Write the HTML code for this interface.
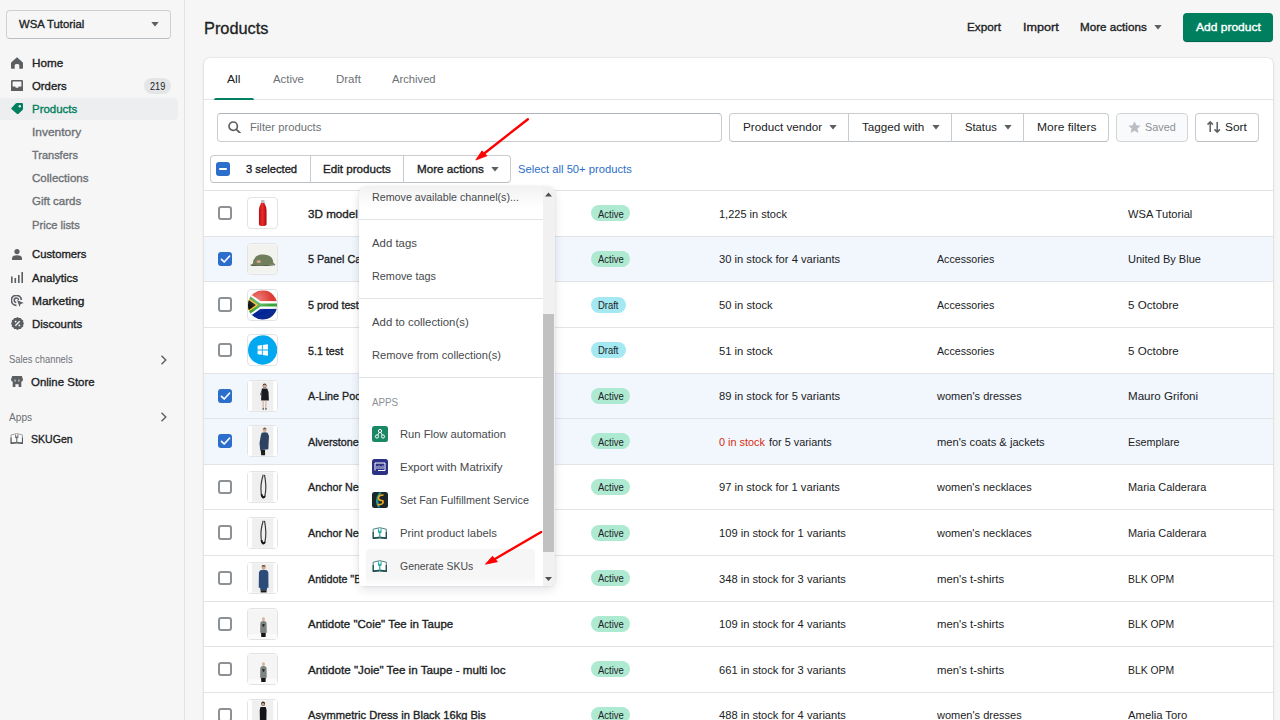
<!DOCTYPE html>
<html><head><meta charset="utf-8"><title>Products</title>
<style>
html,body{margin:0;padding:0;width:1280px;height:720px;overflow:hidden;background:#f6f6f7;font-family:"Liberation Sans",sans-serif;}
.a{position:absolute;box-sizing:border-box;}
.t{position:absolute;white-space:nowrap;line-height:1;transform-origin:0 0;}
</style></head><body>
<div class="a" style="left:184.00px;top:0.00px;width:1.00px;height:720.00px;background:#e1e3e5"></div>
<div class="a" style="left:6.00px;top:9.50px;width:165.00px;height:29.00px;border:1.5px solid #cdd0d3;border-bottom-color:#b9bec2;border-radius:4px;background:#f6f6f7"></div>
<svg class="a" style="left:150.50px;top:22.20px;" width="8" height="5" viewBox="0 0 8 5"><path d="M0.3 0 L7.7 0 L4 4.6Z" fill="#5c5f62"/></svg>
<div class="a" style="left:0.00px;top:97.80px;width:177.50px;height:21.80px;background:#edeeef;border-radius:0 4px 4px 0"></div>
<div class="a" style="left:143.70px;top:77.80px;width:27.20px;height:15.80px;background:#e4e5e7;border-radius:8px"></div>
<svg class="a" style="left:11.00px;top:56.70px;" width="12" height="12" viewBox="0 0 12 12"><path d="M6 0.2 L11.6 5.2 Q12 5.6 12 6.2 V11 Q12 11.8 11.2 11.8 H8.3 V8.2 Q8.3 6.9 6 6.9 Q3.7 6.9 3.7 8.2 V11.8 H0.8 Q0 11.8 0 11 V6.2 Q0 5.6 0.4 5.2Z" fill="#5c5f62"/></svg>
<svg class="a" style="left:11.00px;top:79.80px;" width="12" height="11.5" viewBox="0 0 12 11.5"><path d="M1.2 0 H10.8 Q12 0 12 1.2 V10.3 Q12 11.5 10.8 11.5 H1.2 Q0 11.5 0 10.3 V1.2 Q0 0 1.2 0Z M1.6 1.6 V6.6 H4.2 L4.8 7.8 H7.2 L7.8 6.6 H10.4 V1.6Z" fill="#5c5f62" fill-rule="evenodd"/></svg>
<svg class="a" style="left:11.00px;top:103.20px;" width="12" height="11.3" viewBox="0 0 12 11.3"><path d="M5.6 0 H11 Q12 0 12 1 V6 Q12 6.6 11.5 7.1 L7.3 11 Q6.7 11.5 6.1 11 L0.4 5.9 Q0 5.4 0.5 4.9 L4.7 0.5 Q5.1 0 5.6 0Z" fill="#007f5f"/><circle cx="8.8" cy="3.3" r="1.2" fill="#edeeef"/></svg>
<svg class="a" style="left:12.00px;top:248.70px;" width="10" height="11.5" viewBox="0 0 10 11.5"><circle cx="5" cy="2.6" r="2.6" fill="#5c5f62"/><path d="M0 9.5 Q0 6.3 5 6.3 Q10 6.3 10 9.5 V10.2 Q10 11.5 8.7 11.5 H1.3 Q0 11.5 0 10.2Z" fill="#5c5f62"/></svg>
<svg class="a" style="left:11.00px;top:272.00px;" width="12" height="11" viewBox="0 0 12 11"><rect x="0" y="4.5" width="1.6" height="6.5" fill="#5c5f62"/><rect x="3.5" y="6" width="1.6" height="5" fill="#5c5f62"/><rect x="7" y="3" width="1.6" height="8" fill="#5c5f62"/><rect x="10.4" y="0" width="1.6" height="11" fill="#5c5f62"/></svg>
<svg class="a" style="left:10.50px;top:294.80px;" width="13" height="12" viewBox="0 0 13 12"><path d="M5.5 10.3 A5 5 0 1 1 10.4 5" fill="none" stroke="#5c5f62" stroke-width="1.7"/><path d="M5.3 7.5 A2.2 2.2 0 1 1 7.6 5" fill="none" stroke="#5c5f62" stroke-width="1.5"/><path d="M6 5 L12.8 8 L9.6 9 L8.6 12 Z" fill="#5c5f62"/></svg>
<svg class="a" style="left:10.50px;top:317.30px;" width="13" height="13" viewBox="0 0 13 13"><path d="M6.5 0 L8 1 L9.9 0.9 L10.6 2.5 L12.2 3.3 L12.1 5.1 L13 6.5 L12.1 7.9 L12.2 9.7 L10.6 10.5 L9.9 12.1 L8 12 L6.5 13 L5 12 L3.1 12.1 L2.4 10.5 L0.8 9.7 L0.9 7.9 L0 6.5 L0.9 5.1 L0.8 3.3 L2.4 2.5 L3.1 0.9 L5 1Z" fill="#5c5f62"/><path d="M4.3 8.8 L8.7 4.2" stroke="#f6f6f7" stroke-width="1.3"/><circle cx="4.6" cy="4.6" r="0.9" fill="#f6f6f7"/><circle cx="8.4" cy="8.4" r="0.9" fill="#f6f6f7"/></svg>
<svg class="a" style="left:159.50px;top:354.50px;" width="8" height="10" viewBox="0 0 8 10"><path d="M1.5 0.8 L5.8 5 L1.5 9.2" fill="none" stroke="#5c5f62" stroke-width="1.4"/></svg>
<svg class="a" style="left:159.50px;top:412.00px;" width="8" height="10" viewBox="0 0 8 10"><path d="M1.5 0.8 L5.8 5 L1.5 9.2" fill="none" stroke="#5c5f62" stroke-width="1.4"/></svg>
<svg class="a" style="left:10.90px;top:375.60px;" width="12" height="11.7" viewBox="0 0 12 11.7"><path d="M1.2 0 H10.8 L12 3.6 Q12 5.5 10.3 5.7 V10.7 Q10.3 11.7 9.3 11.7 H7.6 V8.2 H4.4 V11.7 H2.7 Q1.7 11.7 1.7 10.7 V5.7 Q0 5.5 0 3.6Z" fill="#5c5f62"/><rect x="3.6" y="3.6" width="0.9" height="2" fill="#f6f6f7"/><rect x="7.5" y="3.6" width="0.9" height="2" fill="#f6f6f7"/></svg>
<svg class="a" style="left:9.90px;top:431.80px;" width="13.5" height="12.5" viewBox="0 0 13.5 12.5"><g transform="scale(0.87,0.92)"><path d="M1.2 3.2 Q7.75 0.2 14.3 3.2 V11.8 Q7.75 10.6 1.2 11.8Z" fill="#fafafa" stroke="#8a8d90" stroke-width="0.9"/><path d="M0.6 6 L1.8 6 L1.8 11.4 Q7.75 10.2 13.7 11.4 L13.7 6 L14.9 6 L14.9 13.3 Q7.75 11.7 0.6 13.3Z" fill="#55595c"/><path d="M5.9 2.6 H9.6 V6.6 Q7.75 7.6 5.9 6.6Z M7 2.6 V4.8 H8.5 V2.6Z" fill="#6d7175" fill-rule="evenodd"/><rect x="7.1" y="6.6" width="1.3" height="5.2" fill="#6d7175"/></g></svg>
<svg class="a" style="left:1154.20px;top:25.20px;" width="8" height="5" viewBox="0 0 8 5"><path d="M0.3 0 L7.7 0 L4 4.6Z" fill="#5c5f62"/></svg>
<div class="a" style="left:1183.40px;top:12.70px;width:89.40px;height:28.90px;background:#007f5f;border-radius:4px;box-shadow:inset 0 -1px 0 rgba(0,0,0,.2),0 1px 0 rgba(22,29,37,.05)"></div>
<div class="a" style="left:204.00px;top:57.90px;width:1068.80px;height:700.00px;background:#fff;border-radius:6px;box-shadow:0 0 0 1px rgba(63,63,68,.05),0 1px 3px 0 rgba(63,63,68,.15)"></div>
<div class="a" style="left:204.00px;top:99.10px;width:1068.80px;height:1.00px;background:#e1e3e5"></div>
<div class="a" style="left:213.60px;top:97.50px;width:40.00px;height:2.60px;background:#008060;border-radius:3px 3px 0 0"></div>
<div class="a" style="left:217.20px;top:112.90px;width:504.60px;height:28.70px;border:1px solid #c9cccf;border-top-color:#aeb4b9;border-radius:4px;background:#fff"></div>
<svg class="a" style="left:228.00px;top:120.80px;" width="13" height="12.5" viewBox="0 0 13 12.5"><circle cx="5.2" cy="5.2" r="4.2" fill="none" stroke="#5c5f62" stroke-width="1.7"/><path d="M8.3 8.3 L12.2 12.2" stroke="#5c5f62" stroke-width="1.8" stroke-linecap="round"/></svg>
<div class="a" style="left:729.30px;top:112.90px;width:380.10px;height:28.70px;border:1px solid #c9cccf;border-bottom-color:#babfc3;border-radius:4px;background:#fff"></div>
<div class="a" style="left:847.80px;top:112.90px;width:1.00px;height:28.70px;background:#c9cccf"></div>
<div class="a" style="left:951.00px;top:112.90px;width:1.00px;height:28.70px;background:#c9cccf"></div>
<div class="a" style="left:1023.00px;top:112.90px;width:1.00px;height:28.70px;background:#c9cccf"></div>
<svg class="a" style="left:828.60px;top:125.20px;" width="8" height="5" viewBox="0 0 8 5"><path d="M0.3 0 L7.7 0 L4 4.6Z" fill="#5c5f62"/></svg>
<svg class="a" style="left:931.70px;top:125.20px;" width="8" height="5" viewBox="0 0 8 5"><path d="M0.3 0 L7.7 0 L4 4.6Z" fill="#5c5f62"/></svg>
<svg class="a" style="left:1004.00px;top:125.20px;" width="8" height="5" viewBox="0 0 8 5"><path d="M0.3 0 L7.7 0 L4 4.6Z" fill="#5c5f62"/></svg>
<div class="a" style="left:1116.30px;top:112.90px;width:72.20px;height:28.70px;border:1px solid #d2d5d8;border-radius:4px;background:#f9fafb"></div>
<svg class="a" style="left:1128.00px;top:121.00px;" width="13" height="12.5" viewBox="0 0 13 12.5"><path d="M6.5 0.3 L8.4 4.3 L12.7 4.7 L9.4 7.6 L10.4 11.9 L6.5 9.7 L2.6 11.9 L3.6 7.6 L0.3 4.7 L4.6 4.3Z" fill="#babec3"/></svg>
<div class="a" style="left:1195.40px;top:112.90px;width:64.00px;height:28.70px;border:1px solid #c9cccf;border-bottom-color:#babfc3;border-radius:4px;background:#fff"></div>
<svg class="a" style="left:1207.00px;top:121.30px;" width="13.5" height="12" viewBox="0 0 13.5 12"><path d="M3.2 11 V1 M0.5 3.6 L3.2 0.9 L5.9 3.6" fill="none" stroke="#5c5f62" stroke-width="1.5"/><path d="M10.2 1 V11 M7.5 8.4 L10.2 11.1 L12.9 8.4" fill="none" stroke="#5c5f62" stroke-width="1.5"/></svg>
<div class="a" style="left:210.40px;top:154.60px;width:300.20px;height:28.10px;border:1px solid #c9cccf;border-bottom-color:#babfc3;border-radius:4px;background:#fff"></div>
<div class="a" style="left:309.60px;top:154.60px;width:1.00px;height:28.10px;background:#c9cccf"></div>
<div class="a" style="left:403.10px;top:154.60px;width:1.00px;height:28.10px;background:#c9cccf"></div>
<div class="a" style="left:216.00px;top:161.50px;width:14.40px;height:14.30px;background:#2c6ecb;border-radius:3px"></div>
<div class="a" style="left:219.30px;top:167.70px;width:7.80px;height:1.90px;background:#fff;border-radius:1px"></div>
<svg class="a" style="left:491.40px;top:167.30px;" width="8" height="5" viewBox="0 0 8 5"><path d="M0.3 0 L7.7 0 L4 4.6Z" fill="#5c5f62"/></svg>
<div class="a" style="left:204.00px;top:190.10px;width:1068.80px;height:1.00px;background:#e1e3e5"></div>
<div class="a" style="left:217.70px;top:206.20px;width:14.30px;height:14.30px;border:2px solid #8c9196;border-radius:3px;background:#fff"></div>
<div class="a" style="left:247.20px;top:197.40px;width:31.30px;height:32.00px;border:1px solid #e1e3e5;border-radius:4px;background:#fff;overflow:hidden"></div>
<div class="a" style="left:591.20px;top:205.40px;width:39.00px;height:16.00px;background:#aee9d1;border-radius:8px"></div>
<div class="a" style="left:204.00px;top:236.20px;width:1068.80px;height:45.60px;background:#f2f7fe"></div>
<div class="a" style="left:204.00px;top:235.70px;width:1068.80px;height:1.00px;background:#e1e3e5"></div>
<div class="a" style="left:217.70px;top:251.80px;width:14.30px;height:14.30px;background:#2c6ecb;border-radius:3px"></div>
<svg class="a" style="left:219.50px;top:253.70px;" width="11" height="10" viewBox="0 0 11 10"><path d="M1.5 5.3 L4.2 8 L9.5 2.2" fill="none" stroke="#fff" stroke-width="1.7" stroke-linecap="round" stroke-linejoin="round"/></svg>
<div class="a" style="left:247.20px;top:243.00px;width:31.30px;height:32.00px;border:1px solid #e1e3e5;border-radius:4px;background:#fff;overflow:hidden"></div>
<div class="a" style="left:591.20px;top:251.00px;width:39.00px;height:16.00px;background:#aee9d1;border-radius:8px"></div>
<div class="a" style="left:204.00px;top:281.30px;width:1068.80px;height:1.00px;background:#e1e3e5"></div>
<div class="a" style="left:217.70px;top:297.40px;width:14.30px;height:14.30px;border:2px solid #8c9196;border-radius:3px;background:#fff"></div>
<div class="a" style="left:247.20px;top:288.60px;width:31.30px;height:32.00px;border:1px solid #e1e3e5;border-radius:4px;background:#fff;overflow:hidden"></div>
<div class="a" style="left:591.20px;top:296.60px;width:34.40px;height:16.00px;background:#a4e8f2;border-radius:8px"></div>
<div class="a" style="left:204.00px;top:326.90px;width:1068.80px;height:1.00px;background:#e1e3e5"></div>
<div class="a" style="left:217.70px;top:343.00px;width:14.30px;height:14.30px;border:2px solid #8c9196;border-radius:3px;background:#fff"></div>
<div class="a" style="left:247.20px;top:334.20px;width:31.30px;height:32.00px;border:1px solid #e1e3e5;border-radius:4px;background:#fff;overflow:hidden"></div>
<div class="a" style="left:591.20px;top:342.20px;width:34.40px;height:16.00px;background:#a4e8f2;border-radius:8px"></div>
<div class="a" style="left:204.00px;top:373.00px;width:1068.80px;height:45.60px;background:#f2f7fe"></div>
<div class="a" style="left:204.00px;top:372.50px;width:1068.80px;height:1.00px;background:#e1e3e5"></div>
<div class="a" style="left:217.70px;top:388.60px;width:14.30px;height:14.30px;background:#2c6ecb;border-radius:3px"></div>
<svg class="a" style="left:219.50px;top:390.50px;" width="11" height="10" viewBox="0 0 11 10"><path d="M1.5 5.3 L4.2 8 L9.5 2.2" fill="none" stroke="#fff" stroke-width="1.7" stroke-linecap="round" stroke-linejoin="round"/></svg>
<div class="a" style="left:247.20px;top:379.80px;width:31.30px;height:32.00px;border:1px solid #e1e3e5;border-radius:4px;background:#fff;overflow:hidden"></div>
<div class="a" style="left:591.20px;top:387.80px;width:39.00px;height:16.00px;background:#aee9d1;border-radius:8px"></div>
<div class="a" style="left:204.00px;top:418.60px;width:1068.80px;height:45.60px;background:#f2f7fe"></div>
<div class="a" style="left:204.00px;top:418.10px;width:1068.80px;height:1.00px;background:#e1e3e5"></div>
<div class="a" style="left:217.70px;top:434.20px;width:14.30px;height:14.30px;background:#2c6ecb;border-radius:3px"></div>
<svg class="a" style="left:219.50px;top:436.10px;" width="11" height="10" viewBox="0 0 11 10"><path d="M1.5 5.3 L4.2 8 L9.5 2.2" fill="none" stroke="#fff" stroke-width="1.7" stroke-linecap="round" stroke-linejoin="round"/></svg>
<div class="a" style="left:247.20px;top:425.40px;width:31.30px;height:32.00px;border:1px solid #e1e3e5;border-radius:4px;background:#fff;overflow:hidden"></div>
<div class="a" style="left:591.20px;top:433.40px;width:39.00px;height:16.00px;background:#aee9d1;border-radius:8px"></div>
<div class="a" style="left:204.00px;top:463.70px;width:1068.80px;height:1.00px;background:#e1e3e5"></div>
<div class="a" style="left:217.70px;top:479.80px;width:14.30px;height:14.30px;border:2px solid #8c9196;border-radius:3px;background:#fff"></div>
<div class="a" style="left:247.20px;top:471.00px;width:31.30px;height:32.00px;border:1px solid #e1e3e5;border-radius:4px;background:#fff;overflow:hidden"></div>
<div class="a" style="left:591.20px;top:479.00px;width:39.00px;height:16.00px;background:#aee9d1;border-radius:8px"></div>
<div class="a" style="left:204.00px;top:509.30px;width:1068.80px;height:1.00px;background:#e1e3e5"></div>
<div class="a" style="left:217.70px;top:525.40px;width:14.30px;height:14.30px;border:2px solid #8c9196;border-radius:3px;background:#fff"></div>
<div class="a" style="left:247.20px;top:516.60px;width:31.30px;height:32.00px;border:1px solid #e1e3e5;border-radius:4px;background:#fff;overflow:hidden"></div>
<div class="a" style="left:591.20px;top:524.60px;width:39.00px;height:16.00px;background:#aee9d1;border-radius:8px"></div>
<div class="a" style="left:204.00px;top:554.90px;width:1068.80px;height:1.00px;background:#e1e3e5"></div>
<div class="a" style="left:217.70px;top:571.00px;width:14.30px;height:14.30px;border:2px solid #8c9196;border-radius:3px;background:#fff"></div>
<div class="a" style="left:247.20px;top:562.20px;width:31.30px;height:32.00px;border:1px solid #e1e3e5;border-radius:4px;background:#fff;overflow:hidden"></div>
<div class="a" style="left:591.20px;top:570.20px;width:39.00px;height:16.00px;background:#aee9d1;border-radius:8px"></div>
<div class="a" style="left:204.00px;top:600.50px;width:1068.80px;height:1.00px;background:#e1e3e5"></div>
<div class="a" style="left:217.70px;top:616.60px;width:14.30px;height:14.30px;border:2px solid #8c9196;border-radius:3px;background:#fff"></div>
<div class="a" style="left:247.20px;top:607.80px;width:31.30px;height:32.00px;border:1px solid #e1e3e5;border-radius:4px;background:#fff;overflow:hidden"></div>
<div class="a" style="left:591.20px;top:615.80px;width:39.00px;height:16.00px;background:#aee9d1;border-radius:8px"></div>
<div class="a" style="left:204.00px;top:646.10px;width:1068.80px;height:1.00px;background:#e1e3e5"></div>
<div class="a" style="left:217.70px;top:662.20px;width:14.30px;height:14.30px;border:2px solid #8c9196;border-radius:3px;background:#fff"></div>
<div class="a" style="left:247.20px;top:653.40px;width:31.30px;height:32.00px;border:1px solid #e1e3e5;border-radius:4px;background:#fff;overflow:hidden"></div>
<div class="a" style="left:591.20px;top:661.40px;width:39.00px;height:16.00px;background:#aee9d1;border-radius:8px"></div>
<div class="a" style="left:204.00px;top:691.70px;width:1068.80px;height:1.00px;background:#e1e3e5"></div>
<div class="a" style="left:217.70px;top:707.80px;width:14.30px;height:14.30px;border:2px solid #8c9196;border-radius:3px;background:#fff"></div>
<div class="a" style="left:247.20px;top:699.00px;width:31.30px;height:32.00px;border:1px solid #e1e3e5;border-radius:4px;background:#fff;overflow:hidden"></div>
<div class="a" style="left:591.20px;top:707.00px;width:39.00px;height:16.00px;background:#aee9d1;border-radius:8px"></div>
<svg class="a" style="left:248.20px;top:198.40px;" width="29.3" height="30" viewBox="0 0 30 30"><defs><linearGradient id="bt" x1="0" x2="1"><stop offset="0" stop-color="#b30e14"/><stop offset=".45" stop-color="#f02a2a"/><stop offset="1" stop-color="#a50d12"/></linearGradient></defs><rect x="13.3" y="1.8" width="3.6" height="3" fill="#bdbdbd"/><path d="M13.4 4.8 Q11.2 9 11.2 12 V26.5 Q11.2 28.3 15.1 28.3 Q19 28.3 19 26.5 V12 Q19 9 16.8 4.8Z" fill="url(#bt)"/></svg>
<svg class="a" style="left:248.20px;top:244.00px;" width="29.3" height="30" viewBox="0 0 30 30"><rect width="30" height="30" fill="#f2f2ef"/><path d="M5 19.5 Q5.5 12 13 10.5 Q21 9.5 24.5 14 Q26 16.5 26 19 L28 20.3 Q16 21.8 2.5 21Z" fill="#717e5c"/><path d="M2.5 21 Q16 21.8 28 20.3 L27.5 21.3 Q15 22.8 3 22Z" fill="#4f5a40"/><ellipse cx="11" cy="17.8" rx="2.3" ry="1.4" fill="#d9a88c"/></svg>
<svg class="a" style="left:248.20px;top:289.60px;" width="29.3" height="30" viewBox="0 0 30 30"><defs><clipPath id="cc"><circle cx="15" cy="15" r="15"/></clipPath><radialGradient id="gl" cx=".35" cy=".3" r=".8"><stop offset="0" stop-color="#fff" stop-opacity=".35"/><stop offset=".6" stop-color="#fff" stop-opacity="0"/><stop offset="1" stop-color="#000" stop-opacity=".15"/></radialGradient></defs><g clip-path="url(#cc)"><rect width="30" height="30" fill="#fff"/><rect y="0" width="30" height="11" fill="#de3831"/><rect y="19" width="30" height="11" fill="#002395"/><path d="M0 2 L14 12 H30 V18 H14 L0 28Z" fill="#fff"/><path d="M0 4.5 L12.8 13.5 H30 V16.5 H12.8 L0 25.5Z" fill="#3aa33a"/><path d="M0 7.5 L10.5 15 L0 22.5Z" fill="#ffb612"/><path d="M0 9.3 L8 15 L0 20.7Z" fill="#000"/><rect width="30" height="30" fill="url(#gl)"/></g></svg>
<svg class="a" style="left:248.20px;top:335.20px;" width="29.3" height="30" viewBox="0 0 30 30"><circle cx="15" cy="15" r="15" fill="#03a9f0"/><path d="M9.8 10.6 L14.2 10 V14.5 H9.8Z M15.1 9.9 L20.4 9.1 V14.5 H15.1Z M9.8 15.4 H14.2 V19.9 L9.8 19.3Z M15.1 15.4 H20.4 V20.8 L15.1 20.1Z" fill="#fff"/></svg>
<svg class="a" style="left:248.20px;top:380.80px;" width="29.3" height="30" viewBox="0 0 30 30"><rect width="30" height="30" fill="#fff"/><rect x="4" width="22" height="30" fill="#efefef"/><ellipse cx="17" cy="4.6" rx="2" ry="2.3" fill="#5a3f30"/><circle cx="17" cy="5" r="1.5" fill="#d8b29a"/><path d="M14.3 7.2 H19.7 L21 11 L21.4 19.5 H13.4 L13.8 11Z" fill="#1b1b1f"/><path d="M13.8 8 L12.6 14 L13.6 14.5Z" fill="#1b1b1f"/><path d="M15.4 19.5 L15.6 28.5 M18.4 19.5 L18.2 28.5" stroke="#cfa993" stroke-width="1.1"/><path d="M14.8 28.3 H16.4 M17.6 28.3 H19.2" stroke="#222" stroke-width="1"/></svg>
<svg class="a" style="left:248.20px;top:426.40px;" width="29.3" height="30" viewBox="0 0 30 30"><rect width="30" height="30" fill="#fff"/><rect x="4" width="22" height="30" fill="#efefef"/><circle cx="17" cy="3.8" r="2.1" fill="#d2ab90"/><path d="M16 1.6 Q17 0.8 18.6 2 L18.6 3 H15.4Z" fill="#6b5a48"/><path d="M14 6.5 Q17 5.6 20 6.5 L21.5 10 L20.8 23.5 L12.5 24.5 L11.8 17 L13.2 9Z" fill="#2d4361"/><path d="M13 24.3 H17.5 V29.5 H13.5Z" fill="#1e1e1e"/></svg>
<svg class="a" style="left:248.20px;top:472.00px;" width="29.3" height="30" viewBox="0 0 30 30"><rect width="30" height="30" fill="#fff"/><rect x="4" width="22" height="30" fill="#efefef"/><path d="M15.6 2.5 Q12.3 13 13.6 22 Q15 27.5 17.4 24 Q19.3 14 16.9 2.5" fill="none" stroke="#3a3a3a" stroke-width="1.2"/><path d="M13.8 22.5 Q15 27.8 17.4 24.2" fill="none" stroke="#151515" stroke-width="2"/></svg>
<svg class="a" style="left:248.20px;top:517.60px;" width="29.3" height="30" viewBox="0 0 30 30"><rect width="30" height="30" fill="#fff"/><rect x="4" width="22" height="30" fill="#efefef"/><path d="M15.6 2.5 Q12.3 13 13.6 22 Q15 27.5 17.4 24 Q19.3 14 16.9 2.5" fill="none" stroke="#3a3a3a" stroke-width="1.2"/><path d="M13.8 22.5 Q15 27.8 17.4 24.2" fill="none" stroke="#151515" stroke-width="2"/></svg>
<svg class="a" style="left:248.20px;top:563.20px;" width="29.3" height="30" viewBox="0 0 30 30"><rect width="30" height="30" fill="#fff"/><rect x="4" width="22" height="30" fill="#efefef"/><circle cx="16" cy="4.2" r="2.1" fill="#cfa68a"/><path d="M14.1 2.3 Q16 1.2 17.9 2.3 L17.9 3.2 H14Z" fill="#5f4a39"/><path d="M12.6 7 Q16 6 19.4 7 L20.8 9 L21 25 L19.6 25 L19.3 27.5 H12.7 L12.4 25 L11 25 L11.2 9Z" fill="#2d4b78"/><path d="M13 27.5 H19 V29.8 H13Z" fill="#1a1a1a"/></svg>
<svg class="a" style="left:248.20px;top:608.80px;" width="29.3" height="30" viewBox="0 0 30 30"><rect width="30" height="30" fill="#f5f5f5"/><rect y="25.5" width="30" height="4.5" fill="#fbfbfb"/><ellipse cx="15.8" cy="10" rx="1.6" ry="2" fill="#d9b49b"/><path d="M13.4 12.4 Q15.8 11.6 18.2 12.4 L19 14 L19.2 24 H12.4 L12.6 14Z" fill="#7d837f"/><path d="M14.5 15 L17.1 15 L16.5 17.8 L15.1 17.8Z" fill="#2a2a2a"/><path d="M13.4 24 H18.2 L18 28.2 H13.6Z" fill="#151515"/></svg>
<svg class="a" style="left:248.20px;top:654.40px;" width="29.3" height="30" viewBox="0 0 30 30"><rect width="30" height="30" fill="#f5f5f5"/><rect y="25.5" width="30" height="4.5" fill="#fbfbfb"/><ellipse cx="15.8" cy="10" rx="1.6" ry="2" fill="#d9b49b"/><path d="M13.4 12.4 Q15.8 11.6 18.2 12.4 L19 14 L19.2 24 H12.4 L12.6 14Z" fill="#7d837f"/><path d="M14.5 15 L17.1 15 L16.5 17.8 L15.1 17.8Z" fill="#2a2a2a"/><path d="M13.4 24 H18.2 L18 28.2 H13.6Z" fill="#151515"/></svg>
<svg class="a" style="left:248.20px;top:700.00px;" width="29.3" height="30" viewBox="0 0 30 30"><rect width="30" height="30" fill="#fff"/><rect x="4" width="22" height="30" fill="#efefef"/><ellipse cx="15.5" cy="3.6" rx="2" ry="2.3" fill="#3a2a22"/><circle cx="15.5" cy="4.2" r="1.4" fill="#cfa68a"/><path d="M12.8 6.8 H18.2 L19 10 L18.8 22 L19.4 30 H11.6 L12.2 22 L12 10Z" fill="#141418"/></svg>
<div class="t" style="left:19.40px;top:19.20px;font-size:11.8px;font-weight:normal;-webkit-text-stroke:0.35px #202223;color:#202223;transform:scaleX(0.9588);">WSA Tutorial</div>
<div class="t" style="left:31.60px;top:57.90px;font-size:11.8px;font-weight:normal;-webkit-text-stroke:0.35px #202223;color:#202223;transform:scaleX(0.9915);">Home</div>
<div class="t" style="left:31.60px;top:80.80px;font-size:11.8px;font-weight:normal;-webkit-text-stroke:0.35px #202223;color:#202223;transform:scaleX(0.9625);">Orders</div>
<div class="t" style="left:31.60px;top:103.60px;font-size:11.8px;font-weight:normal;-webkit-text-stroke:0.35px #007f5f;color:#007f5f;transform:scaleX(0.9709);">Products</div>
<div class="t" style="left:31.60px;top:126.80px;font-size:11.8px;font-weight:normal;-webkit-text-stroke:0.35px #6d7175;color:#6d7175;transform:scaleX(1.0139);">Inventory</div>
<div class="t" style="left:31.60px;top:150.00px;font-size:11.8px;font-weight:normal;-webkit-text-stroke:0.35px #6d7175;color:#6d7175;transform:scaleX(0.9295);">Transfers</div>
<div class="t" style="left:31.60px;top:173.20px;font-size:11.8px;font-weight:normal;-webkit-text-stroke:0.35px #6d7175;color:#6d7175;transform:scaleX(0.9792);">Collections</div>
<div class="t" style="left:31.60px;top:196.40px;font-size:11.8px;font-weight:normal;-webkit-text-stroke:0.35px #6d7175;color:#6d7175;transform:scaleX(0.9747);">Gift cards</div>
<div class="t" style="left:31.60px;top:219.90px;font-size:11.8px;font-weight:normal;-webkit-text-stroke:0.35px #6d7175;color:#6d7175;transform:scaleX(0.9471);">Price lists</div>
<div class="t" style="left:31.60px;top:249.30px;font-size:11.8px;font-weight:normal;-webkit-text-stroke:0.35px #202223;color:#202223;transform:scaleX(0.9539);">Customers</div>
<div class="t" style="left:31.60px;top:272.80px;font-size:11.8px;font-weight:normal;-webkit-text-stroke:0.35px #202223;color:#202223;transform:scaleX(0.9724);">Analytics</div>
<div class="t" style="left:31.60px;top:296.00px;font-size:11.8px;font-weight:normal;-webkit-text-stroke:0.35px #202223;color:#202223;transform:scaleX(1.0136);">Marketing</div>
<div class="t" style="left:31.60px;top:318.90px;font-size:11.8px;font-weight:normal;-webkit-text-stroke:0.35px #202223;color:#202223;transform:scaleX(0.9673);">Discounts</div>
<div class="t" style="left:150.20px;top:80.80px;font-size:11.8px;font-weight:normal;color:#202223;transform:scaleX(0.7723);">219</div>
<div class="t" style="left:8.75px;top:354.20px;font-size:10.5px;font-weight:normal;color:#6d7175;transform:scaleX(0.8931);">Sales channels</div>
<div class="t" style="left:31.40px;top:376.50px;font-size:11.8px;font-weight:normal;-webkit-text-stroke:0.35px #202223;color:#202223;transform:scaleX(0.9699);">Online Store</div>
<div class="t" style="left:8.75px;top:411.80px;font-size:10.5px;font-weight:normal;color:#6d7175;transform:scaleX(0.9652);">Apps</div>
<div class="t" style="left:31.40px;top:433.70px;font-size:11.8px;font-weight:normal;-webkit-text-stroke:0.35px #202223;color:#202223;transform:scaleX(0.8957);">SKUGen</div>
<div class="t" style="left:204.20px;top:19.50px;font-size:16.5px;font-weight:normal;-webkit-text-stroke:0.3px #202223;color:#202223;transform:scaleX(0.9906);">Products</div>
<div class="t" style="left:966.80px;top:22.00px;font-size:11.8px;font-weight:normal;-webkit-text-stroke:0.35px #202223;color:#202223;transform:scaleX(0.9943);">Export</div>
<div class="t" style="left:1022.70px;top:22.00px;font-size:11.8px;font-weight:normal;-webkit-text-stroke:0.35px #202223;color:#202223;transform:scaleX(1.0678);">Import</div>
<div class="t" style="left:1080.20px;top:22.00px;font-size:11.8px;font-weight:normal;-webkit-text-stroke:0.35px #202223;color:#202223;transform:scaleX(0.9877);">More actions</div>
<div class="t" style="left:1196.30px;top:22.00px;font-size:11.8px;font-weight:normal;-webkit-text-stroke:0.35px #ffffff;color:#ffffff;transform:scaleX(1.0186);">Add product</div>
<div class="t" style="left:227.20px;top:74.30px;font-size:11.8px;font-weight:normal;color:#202223;transform:scaleX(1.0297);">All</div>
<div class="t" style="left:273.00px;top:74.30px;font-size:11.8px;font-weight:normal;color:#6d7175;transform:scaleX(0.9619);">Active</div>
<div class="t" style="left:335.70px;top:74.30px;font-size:11.8px;font-weight:normal;color:#6d7175;transform:scaleX(0.9740);">Draft</div>
<div class="t" style="left:391.80px;top:74.30px;font-size:11.8px;font-weight:normal;color:#6d7175;transform:scaleX(0.9499);">Archived</div>
<div class="t" style="left:250.00px;top:122.00px;font-size:11.8px;font-weight:normal;color:#6d7175;transform:scaleX(0.9540);">Filter products</div>
<div class="t" style="left:742.90px;top:122.00px;font-size:11.8px;font-weight:normal;color:#202223;transform:scaleX(0.9900);">Product vendor</div>
<div class="t" style="left:862.40px;top:122.00px;font-size:11.8px;font-weight:normal;color:#202223;transform:scaleX(0.9895);">Tagged with</div>
<div class="t" style="left:965.00px;top:122.00px;font-size:11.8px;font-weight:normal;color:#202223;transform:scaleX(0.9509);">Status</div>
<div class="t" style="left:1037.20px;top:122.00px;font-size:11.8px;font-weight:normal;color:#202223;transform:scaleX(1.0182);">More filters</div>
<div class="t" style="left:1145.20px;top:122.00px;font-size:11.8px;font-weight:normal;color:#8c9196;transform:scaleX(0.9178);">Saved</div>
<div class="t" style="left:1225.00px;top:122.00px;font-size:11.8px;font-weight:normal;color:#202223;transform:scaleX(1.0122);">Sort</div>
<div class="t" style="left:245.80px;top:164.00px;font-size:11.8px;font-weight:normal;-webkit-text-stroke:0.35px #202223;color:#202223;transform:scaleX(0.9502);">3 selected</div>
<div class="t" style="left:323.40px;top:164.00px;font-size:11.8px;font-weight:normal;-webkit-text-stroke:0.35px #202223;color:#202223;transform:scaleX(0.9847);">Edit products</div>
<div class="t" style="left:417.40px;top:164.00px;font-size:11.8px;font-weight:normal;-webkit-text-stroke:0.35px #202223;color:#202223;transform:scaleX(0.9892);">More actions</div>
<div class="t" style="left:517.80px;top:164.00px;font-size:11.8px;font-weight:normal;color:#2c6ecb;transform:scaleX(0.9509);">Select all 50+ products</div>
<div class="t" style="left:308.20px;top:208.80px;font-size:11.8px;font-weight:normal;-webkit-text-stroke:0.35px #202223;color:#202223;transform:scaleX(0.9884);">3D model</div>
<div class="t" style="left:598.00px;top:208.60px;font-size:10.5px;font-weight:normal;color:#202223;transform:scaleX(0.9000);">Active</div>
<div class="t" style="left:718.90px;top:208.80px;font-size:11.8px;font-weight:normal;color:#202223;transform:scaleX(0.9328);">1,225 in stock</div>
<div class="t" style="left:1127.90px;top:208.80px;font-size:11.8px;font-weight:normal;color:#202223;transform:scaleX(0.9428);">WSA Tutorial</div>
<div class="t" style="left:308.20px;top:254.40px;font-size:11.8px;font-weight:normal;-webkit-text-stroke:0.35px #202223;color:#202223;transform:scaleX(0.9100);">5 Panel Camp Cap</div>
<div class="t" style="left:598.00px;top:254.20px;font-size:10.5px;font-weight:normal;color:#202223;transform:scaleX(0.9000);">Active</div>
<div class="t" style="left:718.90px;top:254.40px;font-size:11.8px;font-weight:normal;color:#202223;transform:scaleX(0.9471);">30 in stock for 4 variants</div>
<div class="t" style="left:937.40px;top:254.40px;font-size:11.8px;font-weight:normal;color:#202223;transform:scaleX(0.9010);">Accessories</div>
<div class="t" style="left:1127.90px;top:254.40px;font-size:11.8px;font-weight:normal;color:#202223;transform:scaleX(0.9342);">United By Blue</div>
<div class="t" style="left:308.20px;top:300.00px;font-size:11.8px;font-weight:normal;-webkit-text-stroke:0.35px #202223;color:#202223;transform:scaleX(0.9100);">5 prod test</div>
<div class="t" style="left:598.00px;top:299.80px;font-size:10.5px;font-weight:normal;color:#202223;transform:scaleX(0.9000);">Draft</div>
<div class="t" style="left:718.90px;top:300.00px;font-size:11.8px;font-weight:normal;color:#202223;transform:scaleX(0.9505);">50 in stock</div>
<div class="t" style="left:937.40px;top:300.00px;font-size:11.8px;font-weight:normal;color:#202223;transform:scaleX(0.9010);">Accessories</div>
<div class="t" style="left:1127.90px;top:300.00px;font-size:11.8px;font-weight:normal;color:#202223;transform:scaleX(0.9807);">5 Octobre</div>
<div class="t" style="left:308.20px;top:345.60px;font-size:11.8px;font-weight:normal;-webkit-text-stroke:0.35px #202223;color:#202223;transform:scaleX(0.9072);">5.1 test</div>
<div class="t" style="left:598.00px;top:345.40px;font-size:10.5px;font-weight:normal;color:#202223;transform:scaleX(0.9000);">Draft</div>
<div class="t" style="left:718.90px;top:345.60px;font-size:11.8px;font-weight:normal;color:#202223;transform:scaleX(0.9505);">51 in stock</div>
<div class="t" style="left:937.40px;top:345.60px;font-size:11.8px;font-weight:normal;color:#202223;transform:scaleX(0.9010);">Accessories</div>
<div class="t" style="left:1127.90px;top:345.60px;font-size:11.8px;font-weight:normal;color:#202223;transform:scaleX(0.9807);">5 Octobre</div>
<div class="t" style="left:308.20px;top:391.20px;font-size:11.8px;font-weight:normal;-webkit-text-stroke:0.35px #202223;color:#202223;transform:scaleX(0.9100);">A-Line Pocket Dress</div>
<div class="t" style="left:598.00px;top:391.00px;font-size:10.5px;font-weight:normal;color:#202223;transform:scaleX(0.9000);">Active</div>
<div class="t" style="left:718.90px;top:391.20px;font-size:11.8px;font-weight:normal;color:#202223;transform:scaleX(0.9471);">89 in stock for 5 variants</div>
<div class="t" style="left:937.40px;top:391.20px;font-size:11.8px;font-weight:normal;color:#202223;transform:scaleX(0.9332);">women's dresses</div>
<div class="t" style="left:1127.90px;top:391.20px;font-size:11.8px;font-weight:normal;color:#202223;transform:scaleX(0.9810);">Mauro Grifoni</div>
<div class="t" style="left:308.20px;top:436.80px;font-size:11.8px;font-weight:normal;-webkit-text-stroke:0.35px #202223;color:#202223;transform:scaleX(0.9100);">Alverstone Coat</div>
<div class="t" style="left:598.00px;top:436.60px;font-size:10.5px;font-weight:normal;color:#202223;transform:scaleX(0.9000);">Active</div>
<div class="t" style="left:718.90px;top:436.80px;font-size:11.8px;font-weight:normal;color:#d72c0d;transform:scaleX(0.9200);">0 in stock</div>
<div class="t" style="left:768.80px;top:436.80px;font-size:11.8px;font-weight:normal;color:#202223;transform:scaleX(0.9200);">for 5 variants</div>
<div class="t" style="left:937.40px;top:436.80px;font-size:11.8px;font-weight:normal;color:#202223;transform:scaleX(0.9471);">men's coats &amp; jackets</div>
<div class="t" style="left:1127.90px;top:436.80px;font-size:11.8px;font-weight:normal;color:#202223;transform:scaleX(0.9133);">Esemplare</div>
<div class="t" style="left:308.20px;top:482.40px;font-size:11.8px;font-weight:normal;-webkit-text-stroke:0.35px #202223;color:#202223;transform:scaleX(0.9100);">Anchor Necklace</div>
<div class="t" style="left:598.00px;top:482.20px;font-size:10.5px;font-weight:normal;color:#202223;transform:scaleX(0.9000);">Active</div>
<div class="t" style="left:718.90px;top:482.40px;font-size:11.8px;font-weight:normal;color:#202223;transform:scaleX(0.9456);">97 in stock for 1 variants</div>
<div class="t" style="left:937.40px;top:482.40px;font-size:11.8px;font-weight:normal;color:#202223;transform:scaleX(0.9292);">women's necklaces</div>
<div class="t" style="left:1127.90px;top:482.40px;font-size:11.8px;font-weight:normal;color:#202223;transform:scaleX(0.9258);">Maria Calderara</div>
<div class="t" style="left:308.20px;top:528.00px;font-size:11.8px;font-weight:normal;-webkit-text-stroke:0.35px #202223;color:#202223;transform:scaleX(0.9100);">Anchor Necklace Long</div>
<div class="t" style="left:598.00px;top:527.80px;font-size:10.5px;font-weight:normal;color:#202223;transform:scaleX(0.9000);">Active</div>
<div class="t" style="left:718.90px;top:528.00px;font-size:11.8px;font-weight:normal;color:#202223;transform:scaleX(0.9441);">109 in stock for 1 variants</div>
<div class="t" style="left:937.40px;top:528.00px;font-size:11.8px;font-weight:normal;color:#202223;transform:scaleX(0.9292);">women's necklaces</div>
<div class="t" style="left:1127.90px;top:528.00px;font-size:11.8px;font-weight:normal;color:#202223;transform:scaleX(0.9258);">Maria Calderara</div>
<div class="t" style="left:308.20px;top:573.60px;font-size:11.8px;font-weight:normal;-webkit-text-stroke:0.35px #202223;color:#202223;transform:scaleX(0.9100);">Antidote &quot;Boie&quot; Tee</div>
<div class="t" style="left:598.00px;top:573.40px;font-size:10.5px;font-weight:normal;color:#202223;transform:scaleX(0.9000);">Active</div>
<div class="t" style="left:718.90px;top:573.60px;font-size:11.8px;font-weight:normal;color:#202223;transform:scaleX(0.9441);">348 in stock for 3 variants</div>
<div class="t" style="left:937.40px;top:573.60px;font-size:11.8px;font-weight:normal;color:#202223;transform:scaleX(0.9632);">men's t-shirts</div>
<div class="t" style="left:1127.90px;top:573.60px;font-size:11.8px;font-weight:normal;color:#202223;transform:scaleX(0.8790);">BLK OPM</div>
<div class="t" style="left:308.20px;top:619.20px;font-size:11.8px;font-weight:normal;-webkit-text-stroke:0.35px #202223;color:#202223;transform:scaleX(0.9747);">Antidote &quot;Coie&quot; Tee in Taupe</div>
<div class="t" style="left:598.00px;top:619.00px;font-size:10.5px;font-weight:normal;color:#202223;transform:scaleX(0.9000);">Active</div>
<div class="t" style="left:718.90px;top:619.20px;font-size:11.8px;font-weight:normal;color:#202223;transform:scaleX(0.9441);">109 in stock for 4 variants</div>
<div class="t" style="left:937.40px;top:619.20px;font-size:11.8px;font-weight:normal;color:#202223;transform:scaleX(0.9632);">men's t-shirts</div>
<div class="t" style="left:1127.90px;top:619.20px;font-size:11.8px;font-weight:normal;color:#202223;transform:scaleX(0.8790);">BLK OPM</div>
<div class="t" style="left:308.20px;top:664.80px;font-size:11.8px;font-weight:normal;-webkit-text-stroke:0.35px #202223;color:#202223;transform:scaleX(0.9870);">Antidote &quot;Joie&quot; Tee in Taupe - multi loc</div>
<div class="t" style="left:598.00px;top:664.60px;font-size:10.5px;font-weight:normal;color:#202223;transform:scaleX(0.9000);">Active</div>
<div class="t" style="left:718.90px;top:664.80px;font-size:11.8px;font-weight:normal;color:#202223;transform:scaleX(0.9441);">661 in stock for 3 variants</div>
<div class="t" style="left:937.40px;top:664.80px;font-size:11.8px;font-weight:normal;color:#202223;transform:scaleX(0.9632);">men's t-shirts</div>
<div class="t" style="left:1127.90px;top:664.80px;font-size:11.8px;font-weight:normal;color:#202223;transform:scaleX(0.8790);">BLK OPM</div>
<div class="t" style="left:308.20px;top:710.40px;font-size:11.8px;font-weight:normal;-webkit-text-stroke:0.35px #202223;color:#202223;transform:scaleX(0.9423);">Asymmetric Dress in Black 16kg Bis</div>
<div class="t" style="left:598.00px;top:710.20px;font-size:10.5px;font-weight:normal;color:#202223;transform:scaleX(0.9000);">Active</div>
<div class="t" style="left:718.90px;top:710.40px;font-size:11.8px;font-weight:normal;color:#202223;transform:scaleX(0.9441);">488 in stock for 4 variants</div>
<div class="t" style="left:937.40px;top:710.40px;font-size:11.8px;font-weight:normal;color:#202223;transform:scaleX(0.9332);">women's dresses</div>
<div class="t" style="left:1127.90px;top:710.40px;font-size:11.8px;font-weight:normal;color:#202223;transform:scaleX(0.9553);">Amelia Toro</div>
<div class="a" style="left:358.90px;top:187.40px;width:195.70px;height:398.30px;background:#fff;border-radius:6px;overflow:hidden;box-shadow:0 0 3px rgba(0,0,0,.10),0 4px 10px rgba(33,43,54,.12)"></div>
<div class="a" style="left:358.90px;top:218.90px;width:183.80px;height:1.00px;background:#e1e3e5"></div>
<div class="a" style="left:358.90px;top:297.60px;width:183.80px;height:1.00px;background:#e1e3e5"></div>
<div class="a" style="left:358.90px;top:377.20px;width:183.80px;height:1.00px;background:#e1e3e5"></div>
<div class="a" style="left:366.20px;top:549.20px;width:168.40px;height:36.50px;background:#f6f6f7;border-radius:4px 4px 0 0"></div>
<div class="a" style="left:358.90px;top:576.00px;width:183.80px;height:9.80px;background:linear-gradient(rgba(255,255,255,0),rgba(255,255,255,.9))"></div>
<div class="a" style="left:542.70px;top:187.20px;width:11.90px;height:398.70px;background:#f1f1f1;border-radius:0 6px 6px 0"></div>
<div class="a" style="left:543.30px;top:314.40px;width:10.50px;height:238.10px;background:#c1c1c1"></div>
<svg class="a" style="left:545.00px;top:192.30px;" width="7" height="4.5" viewBox="0 0 7 4.5"><path d="M0 4.5 L3.5 0.5 L7 4.5Z" fill="#505050"/></svg>
<svg class="a" style="left:545.00px;top:577.30px;" width="7" height="4.5" viewBox="0 0 7 4.5"><path d="M0 0 L3.5 4 L7 0Z" fill="#505050"/></svg>
<svg class="a" style="left:371.90px;top:426.20px;" width="16" height="16" viewBox="0 0 16 16"><rect width="16" height="16" rx="2.5" fill="#1a8765"/><circle cx="8" cy="5" r="1.6" fill="none" stroke="#fff" stroke-width="1"/><circle cx="5" cy="10.5" r="1.6" fill="none" stroke="#fff" stroke-width="1"/><circle cx="11" cy="10.5" r="1.6" fill="none" stroke="#fff" stroke-width="1"/><path d="M7.2 6.4 L5.8 9 M8.8 6.4 L10.2 9" stroke="#fff" stroke-width="1"/></svg>
<svg class="a" style="left:371.90px;top:459.20px;" width="16" height="16" viewBox="0 0 16 16"><rect width="16" height="16" rx="2.5" fill="#2b3185"/><path d="M3 11.5 V4 H13 V11.5 H6" fill="none" stroke="#fff" stroke-width="1"/><path d="M5 10 V7 M7 10 V6.5 M9 10 V7.2 M11 10 V6.5" stroke="#fff" stroke-width="0.8"/></svg>
<svg class="a" style="left:371.90px;top:492.00px;" width="16" height="16" viewBox="0 0 16 16"><rect width="16" height="16" rx="2.5" fill="#1d2729"/><path d="M6 15.5 Q1.5 9 7 0.5 L9.5 0.5 Q4 8 8 15.5Z" fill="#1c9a97"/><path d="M11.5 3 Q6 3 6.5 6.5 Q7 8.5 10 8.5 Q12 9 10.5 11.5 Q9 13 5.5 12.5" fill="none" stroke="#f0a81e" stroke-width="1.7"/></svg>
<svg class="a" style="left:372.30px;top:525.80px;" width="15.5" height="13.5" viewBox="0 0 15.5 13.5"><path d="M1.2 3.2 Q7.75 0.2 14.3 3.2 V11.8 Q7.75 10.6 1.2 11.8Z" fill="#fff" stroke="#3b6e6e" stroke-width="0.9"/><path d="M0.6 6 L1.8 6 L1.8 11.4 Q7.75 10.2 13.7 11.4 L13.7 6 L14.9 6 L14.9 13.3 Q7.75 11.7 0.6 13.3Z" fill="#1e4a4b"/><path d="M5.9 2.6 H9.6 V6.6 Q7.75 7.6 5.9 6.6Z M7 2.6 V4.8 H8.5 V2.6Z" fill="#2fb0a8" fill-rule="evenodd"/><rect x="7.1" y="6.6" width="1.3" height="5.2" fill="#2fb0a8"/></svg>
<svg class="a" style="left:372.30px;top:558.75px;" width="15.5" height="13.5" viewBox="0 0 15.5 13.5"><path d="M1.2 3.2 Q7.75 0.2 14.3 3.2 V11.8 Q7.75 10.6 1.2 11.8Z" fill="#fff" stroke="#3b6e6e" stroke-width="0.9"/><path d="M0.6 6 L1.8 6 L1.8 11.4 Q7.75 10.2 13.7 11.4 L13.7 6 L14.9 6 L14.9 13.3 Q7.75 11.7 0.6 13.3Z" fill="#1e4a4b"/><path d="M5.9 2.6 H9.6 V6.6 Q7.75 7.6 5.9 6.6Z M7 2.6 V4.8 H8.5 V2.6Z" fill="#2fb0a8" fill-rule="evenodd"/><rect x="7.1" y="6.6" width="1.3" height="5.2" fill="#2fb0a8"/></svg>
<div class="a" style="left:358.90px;top:187.40px;width:183.80px;height:24.00px;background:linear-gradient(rgba(0,0,0,.05),rgba(0,0,0,.015) 60%,rgba(0,0,0,0));border-radius:6px 0 0 0"></div>
<div class="t" style="left:371.90px;top:191.60px;font-size:11.8px;font-weight:normal;color:#46494c;transform:scaleX(0.9070);">Remove available channel(s)...</div>
<div class="t" style="left:371.90px;top:238.00px;font-size:11.8px;font-weight:normal;color:#46494c;transform:scaleX(0.9642);">Add tags</div>
<div class="t" style="left:371.90px;top:271.20px;font-size:11.8px;font-weight:normal;color:#46494c;transform:scaleX(0.9194);">Remove tags</div>
<div class="t" style="left:371.90px;top:317.00px;font-size:11.8px;font-weight:normal;color:#46494c;transform:scaleX(0.9639);">Add to collection(s)</div>
<div class="t" style="left:371.90px;top:349.90px;font-size:11.8px;font-weight:normal;color:#46494c;transform:scaleX(0.9408);">Remove from collection(s)</div>
<div class="t" style="left:371.90px;top:396.50px;font-size:10.8px;font-weight:normal;color:#8c9196;transform:scaleX(0.9061);">APPS</div>
<div class="t" style="left:400.20px;top:429.30px;font-size:11.8px;font-weight:normal;color:#46494c;transform:scaleX(0.9500);">Run Flow automation</div>
<div class="t" style="left:400.20px;top:461.80px;font-size:11.8px;font-weight:normal;color:#46494c;transform:scaleX(0.9712);">Export with Matrixify</div>
<div class="t" style="left:400.20px;top:494.50px;font-size:11.8px;font-weight:normal;color:#46494c;transform:scaleX(0.9145);">Set Fan Fulfillment Service</div>
<div class="t" style="left:400.20px;top:527.80px;font-size:11.8px;font-weight:normal;color:#46494c;transform:scaleX(0.9596);">Print product labels</div>
<div class="t" style="left:400.20px;top:560.70px;font-size:11.8px;font-weight:normal;color:#46494c;transform:scaleX(0.8860);">Generate SKUs</div>
<svg class="a" style="left:0;top:0;pointer-events:none" width="1280" height="720" viewBox="0 0 1280 720">
<path d="M527.9 119.2 L484.5 153.3" stroke="#ff0000" stroke-width="2.4" stroke-linecap="round"/>
<path d="M475.8 160 L482 150.8 L487 155.8Z" fill="#ff0000" stroke="#ff0000" stroke-width="0.8" stroke-linejoin="round"/>
<path d="M541.2 532 L495 559" stroke="#ff0000" stroke-width="2.4" stroke-linecap="round"/>
<path d="M485.4 564.2 L492.5 556.2 L497.5 561.7Z" fill="#ff0000" stroke="#ff0000" stroke-width="0.8" stroke-linejoin="round"/>
</svg>
</body></html>
